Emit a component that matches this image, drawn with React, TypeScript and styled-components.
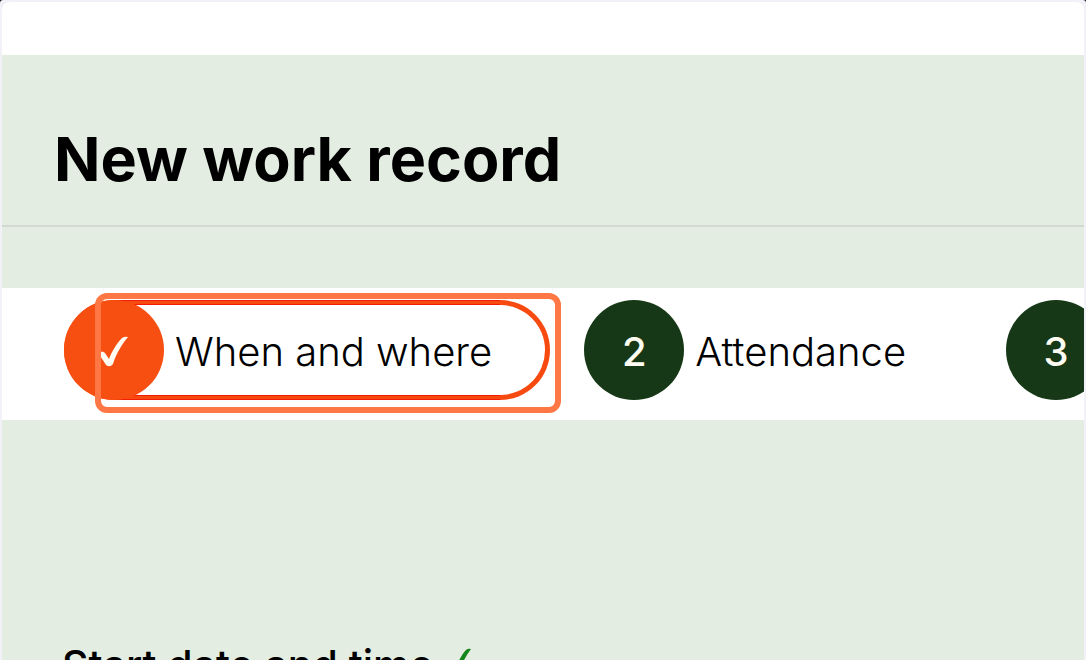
import React from "react";
import styled, { createGlobalStyle } from "styled-components";

const GlobalStyle = createGlobalStyle`
  *, *::before, *::after { box-sizing: border-box; }
  body {
    margin: 0;
    background: #000;
    font-family: Inter, "Liberation Sans", sans-serif;
    color: #000;
  }
`;

const Frame = styled.div`
  height: 100vh;
  display: flex;
  flex-direction: column;
  overflow: hidden;
  border: 2px solid #f2f1f7;
  border-bottom: 0;
  border-radius: 3px 3px 0 0;
  background: #f2f1f7;
`;

const TopBar = styled.header`
  flex: none;
  height: 53px;
  border-radius: 8px 8px 0 0;
  background: #fff;
`;

const Page = styled.main`
  flex: 1;
  background: #e3ede1;
`;

const TitleBar = styled.div`
  padding: 68px 52px 30px;
  border-bottom: 2px solid #d1d9d0;
`;

const Title = styled.h1`
  margin: 0;
  font-size: 61px;
  line-height: 72px;
  font-weight: 700;
  white-space: nowrap;
`;

const Steps = styled.ol`
  display: flex;
  gap: 34px;
  margin: 61px 0 0;
  padding: 12px 0 20px 62px;
  list-style: none;
  background: #fff;
  overflow: hidden;
`;

const StepItem = styled.li`
  position: relative;
  flex: none;
`;

const StepButton = styled.button<{ $current?: boolean }>`
  position: relative;
  display: flex;
  align-items: center;
  gap: 11px;
  height: 100px;
  padding: 0 ${(p) => (p.$current ? 58 : 66)}px 0 0;
  border: 0;
  border-radius: 50px;
  background: transparent;
  box-shadow: ${(p) => (p.$current ? "inset 0 0 0 5px #f74a10" : "none")};
  color: #000;
  font: 300 40px/48px Inter, "Liberation Sans", sans-serif;
  white-space: nowrap;
  cursor: pointer;

  &::before {
    content: "";
    display: ${(p) => (p.$current ? "block" : "none")};
    position: absolute;
    inset: 0 50px;
    border: solid #f51c05;
    border-width: 1px 0;
  }

  &::after {
    content: "";
    display: ${(p) => (p.$current ? "block" : "none")};
    position: absolute;
    inset: 4px 50px;
    border: solid #f51c05;
    border-width: 1px 0;
  }
`;

const Marker = styled.span<{ $current?: boolean }>`
  position: relative;
  z-index: 1;
  display: grid;
  place-items: center;
  flex: none;
  width: 100px;
  height: 100px;
  padding-top: 3px;
  border-radius: 50%;
  background: ${(p) => (p.$current ? "#f74e11" : "#173817")};
  color: #fffdf3;
  font-weight: 500;
`;

const StepLabel = styled.span`
  padding-top: 4px;
`;

const Highlight = styled.span`
  position: absolute;
  z-index: 2;
  inset: -7px -11px -13px 31px;
  border: 6px solid #ff7745;
  border-radius: 12px;
  pointer-events: none;
`;

const FieldHeading = styled.h2`
  display: flex;
  align-items: center;
  gap: 12px;
  margin: 0;
  padding: 221px 60px 0;
  font-size: 41px;
  line-height: 48px;
  font-weight: 500;
  white-space: nowrap;
`;

const CheckMark = () => (
  <svg width="30" height="34" viewBox="0 0 30 34" fill="none" aria-hidden="true">
    <path
      d="M1 18 Q3 15 6 18 L10 24 C13 16 18 8 23 3 Q26 1 29 2 C23 9 17 19 14 29 Q11 33 7 30 Q4 25 1 21 Z"
      fill="currentColor"
    />
  </svg>
);

const DoneMark = () => (
  <svg width="26" height="34" viewBox="0 0 26 34" fill="none" aria-hidden="true">
    <path
      d="M1 19 Q3 16 6 19 L9 24 C11 16 15 7 20 2 Q22 0 25 1 C19 9 14 19 12 29 Q10 33 6 30 Q4 25 1 21 Z"
      fill="#16851b"
    />
  </svg>
);

const steps = [
  { marker: <CheckMark />, label: "When and where", current: true },
  { marker: "2", label: "Attendance" },
  { marker: "3", label: "" },
];

export default function App() {
  return (
    <>
      <GlobalStyle />
      <Frame>
        <TopBar />
        <Page>
          <TitleBar>
            <Title>New work record</Title>
          </TitleBar>
          <Steps>
            {steps.map((step, index) => (
              <StepItem key={index}>
                <StepButton
                  type="button"
                  $current={step.current}
                  aria-current={step.current ? "step" : undefined}
                >
                  <Marker $current={step.current}>{step.marker}</Marker>
                  <StepLabel>{step.label}</StepLabel>
                </StepButton>
                {step.current && <Highlight />}
              </StepItem>
            ))}
          </Steps>
          <FieldHeading>
            Start date and time
            <DoneMark />
          </FieldHeading>
        </Page>
      </Frame>
    </>
  );
}
